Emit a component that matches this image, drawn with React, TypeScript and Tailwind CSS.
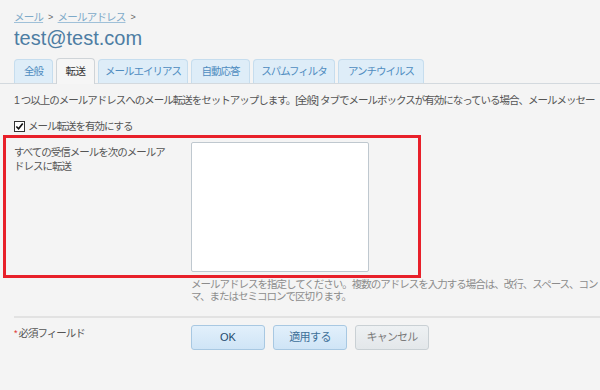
import React from "react";

const jp = "font-['Liberation_Sans','Noto_Sans_CJK_JP',sans-serif]";

const tabs = [
  { label: "全般", w: "w-[39px]" },
  { label: "転送", w: "w-[39px]" },
  { label: "メールエイリアス", w: "w-[90px]" },
  { label: "自動応答", w: "w-[59px]" },
  { label: "スパムフィルタ", w: "w-[82px]" },
  { label: "アンチウイルス", w: "w-[86px]" },
];

export default function App() {
  return (
    <div className={`relative w-[600px] h-[390px] overflow-hidden bg-[#f4f4f4] text-[#444] ${jp}`}>
      {/* Breadcrumb */}
      <div className="pl-[14px] pt-[10px] flex items-center gap-[5px] text-[10.5px] tracking-[-0.8px] leading-[14px]">
        <span className="text-[#7eaac9] underline decoration-[#9fc0d8]">メール</span>
        <span className="text-[#666] text-[9px]">&gt;</span>
        <span className="text-[#7eaac9] underline decoration-[#9fc0d8]">メールアドレス</span>
        <span className="text-[#666] text-[9px]">&gt;</span>
      </div>

      {/* Title */}
      <h1 className="pl-[14px] mt-[2px] text-[20px] leading-[24px] text-[#4d7da3] font-['Liberation_Sans',sans-serif]">
        test@test.com
      </h1>

      {/* Tabs */}
      <div className="mt-[9px] flex items-end gap-[3px] pl-[14px] border-b border-[#d3d9de] h-[25px]">
        {tabs.map((t) =>
          t.label === "転送" ? (
            <div
              key={t.label}
              className={`${t.w} h-[26px] -mb-px flex items-center justify-center rounded-t-[4px] border border-b-0 border-[#cfd4d8] bg-[#f6f6f6] text-[10.5px] tracking-[-0.6px] text-[#333]`}
            >
              {t.label}
            </div>
          ) : (
            <div
              key={t.label}
              className={`${t.w} h-[24px] flex items-center justify-center rounded-t-[4px] border border-b-0 border-[#c6ddee] bg-[#deedf8] text-[10.5px] tracking-[-1px] text-[#4f8cc0]`}
            >
              {t.label}
            </div>
          )
        )}
      </div>

      {/* Description */}
      <p className="mt-[9px] pl-[14px] whitespace-nowrap overflow-hidden text-[10.5px] tracking-[-1px] leading-[14px] text-[#555]">
        1 つ以上のメールアドレスへのメール転送をセットアップします。[全般] タブでメールボックスが有効になっている場合、メールメッセー
      </p>

      {/* Checkbox */}
      <label className="mt-[12px] pl-[14px] flex items-center gap-[3px] text-[10.5px] tracking-[-1px] leading-[14px] text-[#555]">
        <span className="w-[11px] h-[11px] border border-[#333] bg-white flex items-center justify-center">
          <svg viewBox="0 0 10 10" className="w-[9px] h-[9px]">
            <path d="M1.5 5 L4 7.6 L8.6 1.6" fill="none" stroke="#111" strokeWidth="1.8" />
          </svg>
        </span>
        メール転送を有効にする
      </label>

      {/* Forward row */}
      <div className="mt-[9px] flex pl-[14px]">
        <div className="w-[177px] pt-[3px] pr-[12px] text-[10.5px] tracking-[-1px] leading-[14px] text-[#555]">
          すべての受信メールを次のメールア
          <br />
          ドレスに転送
        </div>
        <div className="flex flex-col">
          <textarea className="w-[178px] h-[130px] bg-white border border-[#bfc8cf] rounded-[2px] resize-none outline-none" />
          <p className="mt-[6px] whitespace-nowrap text-[10.5px] tracking-[-1px] leading-[12px] text-[#8c8c8c]">
            メールアドレスを指定してください。複数のアドレスを入力する場合は、改行、スペース、コン
            <br />
            マ、またはセミコロンで区切ります。
          </p>
        </div>
      </div>

      {/* Divider */}
      <div className="ml-[14px] mt-[14px] h-[2px] bg-[#e2e2e2]" />

      {/* Footer */}
      <div className="mt-[7px] pl-[14px] flex">
        <div className="w-[177px] text-[10.5px] tracking-[-1px] leading-[14px] text-[#555] pt-[1px]">
          <span className="text-[#e03030] text-[9px] align-top">*</span> 必須フィールド
        </div>
        <div className="flex gap-[8px]">
          <button className="w-[74px] h-[25px] rounded-[3px] border border-[#a8c8e2] bg-gradient-to-b from-[#e2f0fb] to-[#cfe4f6] text-[11px] text-[#1f4a6e]">
            OK
          </button>
          <button className="w-[74px] h-[25px] rounded-[3px] border border-[#a8c8e2] bg-gradient-to-b from-[#e2f0fb] to-[#cfe4f6] text-[11px] tracking-[-0.6px] text-[#3d6f98]">
            適用する
          </button>
          <button className="w-[74px] h-[25px] rounded-[3px] border border-[#c9d0d4] bg-gradient-to-b from-[#eef1f3] to-[#e3e7ea] text-[11px] tracking-[-0.8px] text-[#7a7a7a]">
            キャンセル
          </button>
        </div>
      </div>

      {/* Red annotation box */}
      <div className="absolute left-[3px] top-[135px] w-[418px] h-[143px] border-[3px] border-[#e8202a] pointer-events-none" />
    </div>
  );
}
